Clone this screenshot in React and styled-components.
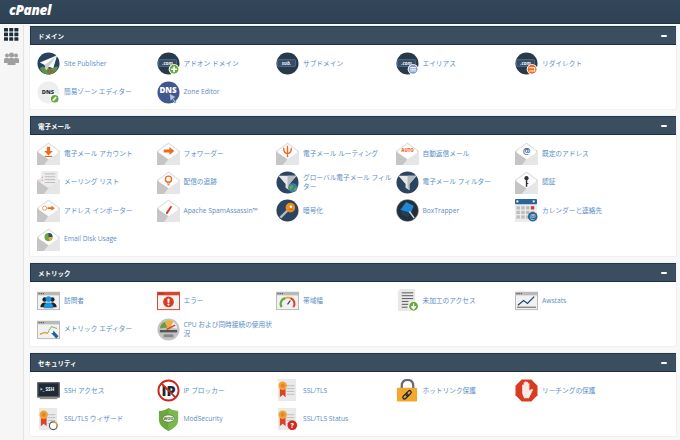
import React from "react";
import styled, { createGlobalStyle } from "styled-components";

const Global = createGlobalStyle`
  html, body { margin: 0; padding: 0; background: #f8f8f8; }
  body { font-family: "Open Sans", "Noto Sans CJK JP", sans-serif; overflow: hidden; }
`;

const Page = styled.div`
  width: 680px;
  height: 440px;
  overflow: hidden;
  display: flex;
  flex-direction: column;
`;
const TopBar = styled.header`
  flex: none;
  height: 24px;
  background: linear-gradient(#33465a, #2e4254);
  border-bottom: 1px solid #1f3347;
  box-sizing: border-box;
  display: flex;
  align-items: center;
  padding: 0 0 1px 9px;
`;
const Logo = styled.div`
  color: #fff;
  font: italic 800 13.5px/1 "Open Sans", sans-serif;
  letter-spacing: -0.3px;
`;
const Body = styled.div`
  flex: 1;
  display: flex;
  border-top: 1.5px solid #fff;
  min-height: 0;
`;
const Side = styled.nav`
  flex: none;
  width: 23px;
  background: #f6f6f6;
  border-right: 1px solid #e4e4e4;
  display: flex;
  flex-direction: column;
  align-items: center;
  gap: 10px;
  padding-top: 3px;
  box-sizing: content-box;
  margin-right: 6px;
`;
const Main = styled.main`
  flex: none;
  width: 646px;
  display: flex;
  flex-direction: column;
  gap: 7px;
  padding-top: 1px;
`;
const Panel = styled.section`
  background: #fff;
  border-radius: 2px;
  box-shadow: 0 0 0 1px #f0f0f0;
`;
const PanelHead = styled.div`
  height: 19px;
  box-sizing: border-box;
  background: #3a4e60;
  border-top: 1px solid #24384b;
  border-bottom: 1px solid #1c3044;
  border-left: 1px solid #24384b;
  display: flex;
  align-items: center;
  justify-content: space-between;
  padding: 0 9px 0 7px;
  color: #fff;
  font-size: 6.5px;
  font-weight: 700;
`;
const Minus = styled.span`
  width: 6px;
  height: 2px;
  border-radius: 1px;
  background: #fff;
`;
const Grid = styled.div`
  display: grid;
  grid-template-columns: repeat(5, 119.5px);
  grid-auto-rows: 23px;
  row-gap: 5.5px;
  padding: 7px 0 5.5px 7px;
`;
const Item = styled.a`
  display: flex;
  align-items: center;
  gap: 4px;
  color: #5a8dc6;
  font-size: 6.7px;
  line-height: 9.500px;
`;
const Label = styled.span`
  width: 91px;
`;
const IconSvg = styled.svg`
  flex: none;
  width: 23px;
  height: 23px;
`;

const Badge = ({ c, children, r = 5.6, x = 18, y = 18 }) => (
  <g>
    <circle cx={x} cy={y} r={r} fill="#fff" />
    <circle cx={x} cy={y} r={r - 1} fill={c} />
    {children}
  </g>
);
const Domain = ({ t, children }) => (
  <>
    <circle cx="12" cy="12" r="11.5" fill="#2a3947" />
    <rect x="1.5" y="8" width="19" height="7" rx="1" fill="#3a4d60" stroke="#4578ab" strokeWidth=".9" />
    <text x="11" y="13.4" fontSize="5" fontWeight="700" fontStyle="italic" fill="#e8eef4" textAnchor="middle" fontFamily="Open Sans">{t}</text>
    {children}
  </>
);
const Env = ({ children, flap = "#fff" }) => (
  <>
    <path d="M0 9.5 12 .5 24 9.5V24H0Z" fill="#dedede" />
    <path d="M2 9.2 12 2 22 9.2V16L12 20 2 16Z" fill={flap} />
    {children}
    <path d="M0 10 12 18 22 24H0Z" fill="#c5c5c5" />
    <path d="M24 10V24H7L12 18Z" fill="#e6e6e6" />
  </>
);
const DarkFunnel = ({ children }) => (
  <>
    <circle cx="12" cy="12" r="11.5" fill="#2b4560" />
    <path d="M2.5 5H21.5L14 13.5V20L10 17.5V13.5Z" fill="#e8e8e8" />
    <path d="M12 5H21.5L14 13.5V20L12 18.7Z" fill="#b8bcc0" />
    {children}
  </>
);
const Win = ({ children, bg = "#f1f1f1", bar = "#b9b9b9", frame = "#b9b9b9" }) => (
  <>
    <rect x=".5" y="3.5" width="23" height="18" fill={bg} stroke={frame} />
    <rect x="0" y="3" width="24" height="3.6" fill={bar} />
    <circle cx="2.2" cy="4.8" r=".7" fill="#444" />
    <circle cx="4.4" cy="4.8" r=".7" fill="#444" />
    <circle cx="6.6" cy="4.8" r=".7" fill="#444" />
    {children}
  </>
);
const Cert = ({ children }) => (
  <>
    <rect x="2" y="0" width="19" height="23" fill="#e9e9e9" />
    <path d="M11 7H19M11 10H19M11 13H19M11 16H19" stroke="#bdbdbd" strokeWidth="1" />
    <path d="M4 10 4 19 7 16.5 10 19V10Z" fill="#d9442e" />
    <circle cx="7" cy="7" r="4.4" fill="#f0a531" />
    <circle cx="7" cy="7" r="2.2" fill="#e9822a" />
    {children}
  </>
);

const icons = {
  publisher: (
    <>
      <circle cx="12" cy="12" r="11.5" fill="#28425e" />
      <path d="M3 17C6 14 9 16 12 17 15 18 19 15 22 15 21 20 17 23.5 12 23.5 8 23.5 4.5 21 3 17Z" fill="#5d9446" />
      <path d="M11 18C13 17 16 18 17 21 15 23 13 23 11 22Z" fill="#8a6d3f" />
      <path d="M21 3.5 3 11 8 13.5 9.5 19 12.5 15.5 17 17Z" fill="#fff" />
      <path d="M8 13.5 21 3.5 9.5 19Z" fill="#c8d0d8" />
    </>
  ),
  addon: (
    <Domain t=".com">
      <Badge c="#6aa83f" x={17.8} y={18}>
        <path d="M17.8 15V21M14.8 18H20.8" stroke="#fff" strokeWidth="1.8" />
      </Badge>
    </Domain>
  ),
  sub: <Domain t="sub." />,
  alias: (
    <Domain t=".com">
      <Badge c="#7f9cc6" x={17.8} y={18}>
        <path d="M14.8 16.3H20.8M14.8 18H20.8M14.8 19.8H20.8" stroke="#fff" strokeWidth="1" />
      </Badge>
    </Domain>
  ),
  redirect: (
    <Domain t=".com">
      <Badge c="#ee6a1f" x={17.8} y={18}>
        <path d="M15 16.5H20.5V19.8H15" fill="none" stroke="#fff" strokeWidth="1.1" />
      </Badge>
    </Domain>
  ),
  easy: (
    <>
      <circle cx="12" cy="12" r="11.5" fill="#eeeeee" />
      <text x="11.5" y="13.8" fontSize="6" fontWeight="800" fill="#2b3947" textAnchor="middle" fontFamily="Open Sans">DNS</text>
      <Badge c="#6aa83f" x={18.5} y={18.5} r={5}>
        <path d="M16.5 20.5 20 16.8" stroke="#fff" strokeWidth="1.6" />
      </Badge>
    </>
  ),
  zone: (
    <>
      <circle cx="12" cy="12" r="11.5" fill="#41578d" />
      <text x="11.5" y="13" fontSize="8.4" fontWeight="800" fill="#fff" textAnchor="middle" fontFamily="Open Sans">DNS</text>
      <path d="M13 13 20 17 17 18 20 22 18.5 23 16 19 14 21Z" fill="#b7c6e4" stroke="#2b3f70" strokeWidth=".4" />
    </>
  ),
  mailAcct: (
    <Env>
      <path d="M10.3 5H13.7V9.5H16.5L12 14 7.5 9.5H10.3Z" fill="#ee6a1f" />
      <rect x="8" y="14.5" width="8" height="1.2" fill="#ee6a1f" />
    </Env>
  ),
  forward: (
    <Env>
      <path d="M7 7.8H13V5.2L18 9.4 13 13.5V11H7Z" fill="#ee6a1f" />
    </Env>
  ),
  routing: (
    <Env>
      <path d="M12 16V8M12 12C9 12 8 10 8 6M12 12C15 12 16 10 16 6M12 4V8" stroke="#ee6a1f" strokeWidth="1.4" fill="none" />
    </Env>
  ),
  auto: (
    <Env>
      <text x="12" y="10.5" fontSize="4.6" fontWeight="800" fill="#ee6a1f" textAnchor="middle" fontFamily="Open Sans">AUTO</text>
    </Env>
  ),
  atMail: (
    <Env>
      <text x="12" y="12" fontSize="9" fontWeight="600" fill="#2f5d96" textAnchor="middle" fontFamily="Open Sans">@</text>
    </Env>
  ),
  list: (
    <>
      <path d="M0 9.5 12 4 24 9.5V24H0Z" fill="#dedede" />
      <rect x="4" y="0" width="18" height="17" rx="1.5" fill="#ececec" />
      <path d="M8 3H19M8 6H19M8 9H19M8 12H19" stroke="#bbb" strokeWidth="1" />
      <path d="M5.5 6V7M5.5 9V10" stroke="#d9642a" strokeWidth="1" />
      <path d="M0 10 12 18 22 24H0Z" fill="#c5c5c5" />
      <path d="M24 10V24H7L12 18Z" fill="#e6e6e6" />
    </>
  ),
  trace: (
    <Env>
      <circle cx="12" cy="8.5" r="3.2" fill="none" stroke="#ee6a1f" strokeWidth="1.4" />
      <path d="M10.5 12.5H13.5M11 14.5H13" stroke="#ee6a1f" strokeWidth="1.2" />
    </Env>
  ),
  importer: (
    <Env>
      <circle cx="8" cy="9.6" r="2.2" fill="none" stroke="#f0965e" strokeWidth="1" />
      <path d="M11 8.7H15V6.8L18.5 9.6 15 12.3V10.5H11Z" fill="#ee6a1f" />
    </Env>
  ),
  spam: (
    <Env>
      <path d="M10 15 15 7.5" stroke="#d93a22" strokeWidth="2" />
      <path d="M9.5 16 10 14.5 11 15.2Z" fill="#333" />
    </Env>
  ),
  auth: (
    <Env>
      <circle cx="12" cy="7.5" r="2.2" fill="#333" />
      <rect x="11.3" y="9" width="1.5" height="7.5" fill="#333" />
      <rect x="12.5" y="12.5" width="1.4" height="1" fill="#333" />
    </Env>
  ),
  disk: (
    <Env>
      <circle cx="12" cy="9.5" r="4.2" fill="#6aa83f" />
      <path d="M12 9.5V5.3A4.2 4.2 0 0 1 16.2 9.5Z" fill="#2f4c74" />
      <path d="M12 9.5H16.2A4.2 4.2 0 0 1 13 13.6Z" fill="#e8a93a" />
    </Env>
  ),
  globalFilter: (
    <DarkFunnel>
      <circle cx="17.5" cy="17.5" r="4.8" fill="#3c7ea8" />
      <path d="M14.5 15.5C16 14 18 15 18 16.5 18 18 15.5 18 16 20 14 19.5 13.5 17 14.5 15.5ZM19 18C20.5 17 21.5 17.5 21.5 18.5 21 20 20 21 19 21.2Z" fill="#6aa83f" />
    </DarkFunnel>
  ),
  filter: <DarkFunnel />,
  key: (
    <>
      <circle cx="12" cy="12" r="11.5" fill="#2b4560" />
      <path d="M4.5 19.5 12 12" stroke="#b9b9b9" strokeWidth="2.4" />
      <circle cx="15" cy="9" r="5" fill="#ef8a1f" />
      <circle cx="15.5" cy="8" r="1.3" fill="#fff" />
      <path d="M14 10.5 17.5 11" stroke="#c05a10" strokeWidth=".8" />
    </>
  ),
  box: (
    <>
      <circle cx="12" cy="12" r="11.5" fill="#232f3a" stroke="#bbb" strokeWidth=".4" />
      <path d="M10.5 3 18.5 7 15.5 14.5 4.5 11.5Z" fill="#1f87d6" />
      <path d="M4.5 11.5 15.5 14.5 12 19 6.5 17Z" fill="#1f3f5f" />
      <path d="M14 13 19 20" stroke="#d7d7d7" strokeWidth="1.5" />
    </>
  ),
  calendar: (
    <>
      <rect x="0" y="3" width="23" height="21" fill="#ececec" />
      <rect x="0" y="0" width="23" height="5.5" rx="1" fill="#2a6496" />
      <rect x="1.5" y="1.5" width="2" height="2" fill="#fff" />
      <rect x="18.5" y="1.5" width="2" height="2" fill="#fff" />
      {[0, 1, 2, 3].map((c) =>
        [0, 1, 2].map((r) => (
          <rect key={c + "-" + r} x={1.5 + c * 5} y={7.5 + r * 4.8} width="3.6" height="3.4" fill={c === 3 && r === 0 ? "#d9342a" : "#bdbdbd"} />
        ))
      )}
      <circle cx="18.5" cy="18.5" r="5" fill="#2a6496" />
      <text x="18.5" y="21" fontSize="7" fill="#dfe9f2" textAnchor="middle" fontFamily="Open Sans">@</text>
    </>
  ),
  visitors: (
    <Win>
      <circle cx="8" cy="11" r="2.4" fill="#222" />
      <path d="M3.5 19C3.5 15.5 5.5 14 8 14S12 15.500 12 19Z" fill="#222" />
      <circle cx="16" cy="11" r="2.4" fill="#222" />
      <path d="M12 19C12 15.500 14 14 16 14S20.500 15.500 20.500 19Z" fill="#222" />
      <circle cx="12" cy="10.500" r="3" fill="#1f93dc" />
      <path d="M7 20C7 15.500 9 14 12 14S17 15.500 17 20Z" fill="#1f93dc" />
    </Win>
  ),
  error: (
    <Win bar="#d9442e" frame="#d9442e" bg="#f3f3f3">
      <circle cx="12" cy="13.500" r="5.600" fill="#d93a22" />
      <rect x="11" y="10" width="2" height="4.600" rx=".8" fill="#fff" />
      <circle cx="12" cy="16.300" r="1.100" fill="#fff" />
    </Win>
  ),
  bandwidth: (
    <Win>
      <path d="M6 19A6 6 0 0 1 10 9.500" fill="none" stroke="#6aa83f" strokeWidth="2.200" />
      <path d="M10 9.500A6 6 0 0 1 15 9.500" fill="none" stroke="#eeb12f" strokeWidth="2.200" />
      <path d="M15 9.500A6 6 0 0 1 18 19" fill="none" stroke="#d9442e" strokeWidth="2.200" />
      <path d="M12 16 15 12" stroke="#333" strokeWidth="1.200" />
    </Win>
  ),
  raw: (
    <>
      <path d="M4 0H20V23H2V3Z" fill="#e8e8e8" />
      <path d="M6 4H18M6 7H18M6 10H18M6 13H13M6 16H13M6 19H12" stroke="#555" strokeWidth="1" />
      <Badge c="#6aa83f" x={18.300} y={18} r={5.600}>
        <path d="M18.300 15V19M15.800 18 18.300 21 20.800 18" fill="#fff" stroke="#fff" strokeWidth="1.200" />
      </Badge>
    </>
  ),
  awstats: (
    <Win>
      <path d="M3 17 9 12 13 15 20 8" fill="none" stroke="#23456b" strokeWidth="1.300" />
      <path d="M2 19H22" stroke="#555" strokeWidth="1" />
    </Win>
  ),
  metricEd: (
    <Win>
      <path d="M3 17 8 15 11 16 15 9 21 11" fill="none" stroke="#7cb24a" strokeWidth="1" />
      <path d="M3 17 8 15 11 16" fill="none" stroke="#e8a93a" strokeWidth="1.400" />
      <path d="M15 16 20 21.500 22.500 19 17.500 13.500Z" fill="#1f5f96" />
      <path d="M13.500 12.500 16.500 15.500" stroke="#fff" strokeWidth="1.500" />
    </Win>
  ),
  cpu: (
    <>
      <circle cx="12" cy="12" r="11.500" fill="#c2c2c2" />
      <path d="M3 11A9 9 0 0 1 8 4L11 10Z" fill="#6d9a41" />
      <path d="M8 4A9 9 0 0 1 17 4L13.500 10H11Z" fill="#ecb12d" />
      <path d="M17 4A9 9 0 0 1 21 11L14 10.500Z" fill="#eeeeee" />
      <path d="M3 12.500H21V15H3Z" fill="#555" />
      <path d="M7 17H17V20H7Z" fill="#888" />
      <path d="M10 12 19 7.500" stroke="#d9442e" strokeWidth="1.600" />
    </>
  ),
  ssh: (
    <>
      <rect x="0" y="3" width="24" height="16.500" rx="1" fill="#6b6b6b" />
      <rect x="1.500" y="4.500" width="21" height="13.500" fill="#1e2a36" />
      <text x="3" y="13" fontSize="4.800" fontWeight="700" fill="#fff" fontFamily="Open Sans">&gt;_ SSH</text>
      <rect x="3" y="19.500" width="18" height="1.500" fill="#8a8a8a" />
    </>
  ),
  ipBlock: (
    <>
      <circle cx="12" cy="12" r="10.500" fill="#fff" stroke="#c9281c" strokeWidth="2" />
      <text x="12" y="17.500" fontSize="15" fontWeight="800" fill="#1b2733" textAnchor="middle" fontFamily="Open Sans">IP</text>
      <path d="M4.500 4.500 19.500 19.500" stroke="#c9281c" strokeWidth="2" />
    </>
  ),
  ssl: <Cert />,
  wizard: (
    <Cert>
      <circle cx="17" cy="18.500" r="4" fill="#fff" stroke="#555" strokeWidth="1.200" />
      <path d="M17 14.500A4 4 0 0 1 21 18.500" fill="none" stroke="#e8a93a" strokeWidth="1.200" />
    </Cert>
  ),
  sslStatus: (
    <Cert>
      <circle cx="17" cy="18" r="5" fill="#d5281c" />
      <text x="17" y="20.500" fontSize="7" fontWeight="800" fill="#fff" textAnchor="middle" fontFamily="Open Sans">?</text>
    </Cert>
  ),
  shield: (
    <>
      <path d="M12 0C15 2 18 3 22 3V12C22 18 17 21.500 12 24 7 21.500 2 18 2 12V3C6 3 9 2 12 0Z" fill="#6aa83f" />
      <path d="M12 0C15 2 18 3 22 3V12C22 18 17 21.500 12 24Z" fill="#7cb850" />
      <ellipse cx="12" cy="11" rx="6.200" ry="3.800" fill="#f1f5ea" stroke="#3f6b22" strokeWidth=".6" />
      <text x="12" y="12.600" fontSize="4" fontWeight="700" fill="#3f5a2a" textAnchor="middle" fontFamily="Open Sans">WOO</text>
    </>
  ),
  lock: (
    <>
      <path d="M6 11V7C6 3 8.500 1 12 1S18 3 18 7V11" fill="none" stroke="#6b6b6b" strokeWidth="2.400" />
      <rect x="1" y="9" width="21" height="14.500" rx="1" fill="#f0a92b" />
      <g transform="rotate(-45 11.500 16.500)" fill="none" stroke="#1b2733" strokeWidth="1.300">
        <rect x="6" y="14.800" width="6.500" height="3.400" rx="1.700" />
        <rect x="10.500" y="14.800" width="6.500" height="3.400" rx="1.700" />
      </g>
    </>
  ),
  hand: (
    <>
      <path d="M7 .5H17L23.500 7V17L17 23.500H7L.5 17V7Z" fill="#d93a22" />
      <path d="M7.500 6.500C7.500 5.500 9 5.500 9 6.500V4C9 3 10.500 3 10.500 4V3C10.500 2 12 2 12 3V3.500C12 2.500 13.500 2.500 13.500 3.500V5C13.500 4 15 4 15 5V12L17.500 10.500C18.500 10 19 11 18.500 12L14.500 20H9.500L7.500 15Z" fill="#fbe9e4" />
    </>
  ),
};

const sections = [
  {
    title: "ドメイン",
    items: [
      ["publisher", "Site Publisher"],
      ["addon", "アドオン ドメイン"],
      ["sub", "サブドメイン"],
      ["alias", "エイリアス"],
      ["redirect", "リダイレクト"],
      ["easy", "簡易ゾーン エディター"],
      ["zone", "Zone Editor"],
    ],
  },
  {
    title: "電子メール",
    items: [
      ["mailAcct", "電子メール アカウント"],
      ["forward", "フォワーダー"],
      ["routing", "電子メール ルーティング"],
      ["auto", "自動返信メール"],
      ["atMail", "既定のアドレス"],
      ["list", "メーリング リスト"],
      ["trace", "配信の追跡"],
      ["globalFilter", "グローバル電子メール フィルター"],
      ["filter", "電子メール フィルター"],
      ["auth", "認証"],
      ["importer", "アドレス インポーター"],
      ["spam", "Apache SpamAssassin™"],
      ["key", "暗号化"],
      ["box", "BoxTrapper"],
      ["calendar", "カレンダーと連絡先"],
      ["disk", "Email Disk Usage"],
    ],
  },
  {
    title: "メトリック",
    items: [
      ["visitors", "訪問者"],
      ["error", "エラー"],
      ["bandwidth", "帯域幅"],
      ["raw", "未加工のアクセス"],
      ["awstats", "Awstats"],
      ["metricEd", "メトリック エディター"],
      ["cpu", "CPU および同時接続の使用状況"],
    ],
  },
  {
    title: "セキュリティ",
    items: [
      ["ssh", "SSH アクセス"],
      ["ipBlock", "IP ブロッカー"],
      ["ssl", "SSL/TLS"],
      ["lock", "ホットリンク保護"],
      ["hand", "リーチングの保護"],
      ["wizard", "SSL/TLS ウィザード"],
      ["shield", "ModSecurity"],
      ["sslStatus", "SSL/TLS Status"],
    ],
  },
];

const AppsIcon = () => (
  <svg width="15" height="13" viewBox="0 0 15 13">
    {[0, 1, 2].map((c) =>
      [0, 1, 2].map((r) => (
        <rect key={c + "" + r} x={c * 5.2} y={r * 4.6} width="4" height="3.6" rx=".5" fill="#1f2d3a" />
      ))
    )}
  </svg>
);
const PeopleIcon = () => (
  <svg width="15" height="15" viewBox="0 0 15 15" fill="#9f9f9f">
    <circle cx="3" cy="4.500" r="2" />
    <circle cx="12" cy="4.500" r="2" />
    <path d="M0 12V8.500C0 7 1.500 7 3 7S5 7.500 5 9V12ZM10 9C10 7.500 11 7 12 7S15 7 15 8.500V12H10Z" />
    <circle cx="7.500" cy="4" r="2.500" />
    <path d="M3.500 14V9.500C3.500 7.500 5.500 7 7.500 7S11.500 7.500 11.500 9.500V14Z" />
  </svg>
);

export default function App() {
  return (
    <Page>
      <Global />
      <TopBar>
        <Logo>cPanel</Logo>
      </TopBar>
      <Body>
        <Side>
          <AppsIcon />
          <PeopleIcon />
        </Side>
        <Main>
          {sections.map((s) => (
            <Panel key={s.title}>
              <PanelHead>
                <span>{s.title}</span>
                <Minus />
              </PanelHead>
              <Grid>
                {s.items.map(([icon, label]) => (
                  <Item key={label}>
                    <IconSvg viewBox="0 0 24 24">{icons[icon]}</IconSvg>
                    <Label>{label}</Label>
                  </Item>
                ))}
              </Grid>
            </Panel>
          ))}
        </Main>
      </Body>
    </Page>
  );
}
